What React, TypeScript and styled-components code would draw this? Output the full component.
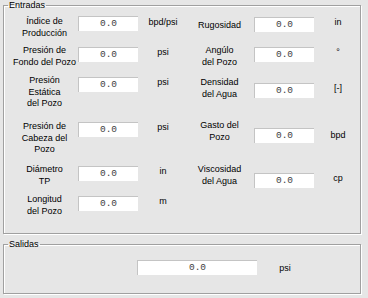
import React from 'react';
import styled, { createGlobalStyle } from 'styled-components';

const GlobalStyle = createGlobalStyle`
  body {
    margin: 0;
    background: #e6e6e6;
    font-family: 'Liberation Sans', Arial, sans-serif;
    color: #000;
  }
`;

interface Field {
  label: string[];
  unit: string;
  h: number;
  lt: number;
  ut: number;
}

const leftFields: Field[] = [
  { label: ['Índice de', 'Producción'], unit: 'bpd/psi', h: 31, lt: 0, ut: 1 },
  { label: ['Presión de', 'Fondo del Pozo'], unit: 'psi', h: 30, lt: -2, ut: 0 },
  { label: ['Presión', 'Estática', 'del Pozo'], unit: 'psi', h: 45, lt: -2, ut: 0 },
  { label: ['Presión de', 'Cabeza del', 'Pozo'], unit: 'psi', h: 44, lt: -1, ut: 0 },
  { label: ['Diámetro', 'TP'], unit: 'in', h: 30, lt: -2, ut: 0 },
  { label: ['Longitud', 'del Pozo'], unit: 'm', h: 30, lt: -2, ut: 0 },
];

const rightFields: Field[] = [
  { label: ['Rugosidad'], unit: 'in', h: 30, lt: 3, ut: 0 },
  { label: ['Angúlo', 'del Pozo'], unit: '°', h: 36, lt: -2, ut: 0 },
  { label: ['Densidad', 'del Agua'], unit: '[-]', h: 45, lt: -6, ut: 0 },
  { label: ['Gasto del', 'Pozo'], unit: 'bpd', h: 45, lt: -8, ut: 2 },
  { label: ['Viscosidad', 'del Agua'], unit: 'cp', h: 30, lt: -9, ut: 0 },
];

const App = () => {
  return (
    <Page>
      <GlobalStyle />
      <Panel $height={234}>
        <Legend>Entradas</Legend>
        <Columns>
          <Column $top={5} $left={7}>
            {leftFields.map(f => (
              <Row key={f.label.join()} $h={f.h} $cols="67px 60px 50px">
                <Label $top={f.lt}>
                  {f.label.map(l => (
                    <span key={l}>{l}</span>
                  ))}
                </Label>
                <EditBox>0.0</EditBox>
                <Unit $top={f.ut}>{f.unit}</Unit>
              </Row>
            ))}
          </Column>
          <Column $top={6} $left={0}>
            {rightFields.map(f => (
              <Row key={f.label.join()} $h={f.h} $cols="66px 60px 48px">
                <Label $top={f.lt} $pr={3}>
                  {f.label.map(l => (
                    <span key={l}>{l}</span>
                  ))}
                </Label>
                <EditBox>0.0</EditBox>
                <Unit $top={f.ut}>{f.unit}</Unit>
              </Row>
            ))}
          </Column>
        </Columns>
      </Panel>
      <Panel $height={55} $mt={5}>
        <Legend>Salidas</Legend>
        <OutputRow>
          <EditBox $w={120}>0.0</EditBox>
          <Unit $top={3} $w={56}>psi</Unit>
        </OutputRow>
      </Panel>
    </Page>
  );
};

export default App;

const Page = styled.div`
  width: 368px;
  height: 298px;
  overflow: hidden;
`;

const Panel = styled.fieldset<{ $height: number; $mt?: number }>`
  box-sizing: border-box;
  width: 358px;
  height: ${({ $height }) => $height}px;
  margin: ${({ $mt }) => $mt || 0}px 0 0 3px;
  padding: 0;
  min-width: 0;
  border: 1px solid #a0a0a0;
  box-shadow: inset 1px 1px 0 #fff, 1px 1px 0 #fff;
`;

const Legend = styled.legend`
  margin-left: 4px;
  padding: 0 1px;
  font-size: 9px;
  line-height: 11px;
`;

const Columns = styled.div`
  display: flex;
`;

const Column = styled.div<{ $top: number; $left: number }>`
  display: flex;
  flex-direction: column;
  margin-top: ${({ $top }) => $top}px;
  margin-left: ${({ $left }) => $left}px;
`;

const Row = styled.div<{ $h: number; $cols: string }>`
  display: grid;
  grid-template-columns: ${({ $cols }) => $cols};
  align-items: start;
  height: ${({ $h }) => $h}px;
`;

const Label = styled.div<{ $top: number; $pr?: number }>`
  display: flex;
  flex-direction: column;
  align-items: center;
  margin-top: ${({ $top }) => $top}px;
  padding-right: ${({ $pr }) => $pr || 0}px;
  font-size: 9px;
  line-height: 11.5px;
  white-space: nowrap;
`;

const EditBox = styled.div<{ $w?: number }>`
  box-sizing: border-box;
  width: ${({ $w }) => $w || 60}px;
  height: 15px;
  background: #fff;
  border-top: 1px solid #c4c4c4;
  border-left: 1px solid #c4c4c4;
  font-family: 'Liberation Mono', 'Courier New', monospace;
  font-size: 9.5px;
  line-height: 14px;
  text-align: center;
  color: #404040;
`;

const Unit = styled.div<{ $top: number; $w?: number }>`
  width: ${({ $w }) => ($w ? `${$w}px` : 'auto')};
  margin-top: ${({ $top }) => $top}px;
  font-size: 9px;
  line-height: 11.5px;
  text-align: center;
  white-space: nowrap;
`;

const OutputRow = styled.div`
  display: flex;
  align-items: flex-start;
  padding: 10px 0 0 133px;
`;
